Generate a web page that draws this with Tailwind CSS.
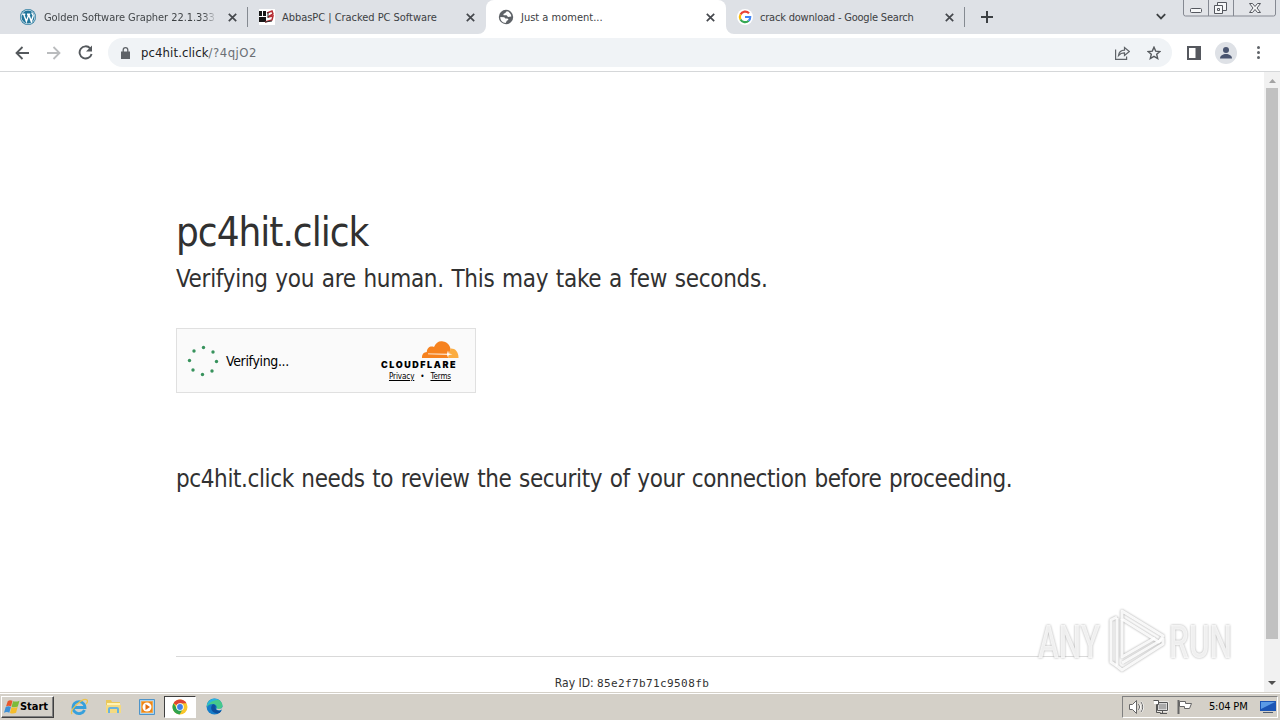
<!DOCTYPE html>
<html lang="en">
<head>
    <meta charset="UTF-8">
    <meta name="viewport" content="width=device-width, initial-scale=1.0">
    <script src="https://cdn.jsdelivr.net/npm/@tailwindcss/browser@4"></script>
    <title>Just a moment...</title>
</head>
<body class="w-[1280px] h-[720px] overflow-hidden flex flex-col bg-white font-['DejaVu_Sans_Condensed','DejaVu_Sans',sans-serif] text-[#313131]">
<!-- tab strip -->
<div class="relative flex h-[34px] shrink-0 bg-[#dee1e6] text-[11px] text-[#3c4043] leading-[34px] whitespace-nowrap">
    <div class="flex items-center w-[248px] pl-5 pr-[10px] shrink-0">
        <svg class="size-4 mr-2 shrink-0" viewBox="0 0 16 16"><circle cx="8" cy="8" r="8" fill="#21759b"/><circle cx="8" cy="8" r="6.9" fill="none" stroke="#fff" stroke-width=".7"/><path d="M2.3 5.3h3M7 5.3h3.2M3.7 5.3l2.7 7.2L8.3 7 7.8 5.3M8.7 5.3l2.6 7.2 1.9-5.7c.3-1.5-1.5-1.7-1.3-3.2" fill="none" stroke="#fff" stroke-width="1.4"/></svg>
        <div class="w-[173px] overflow-hidden pt-px tracking-[-0.06px] bg-linear-to-r from-[#3c4043] from-92% to-transparent bg-clip-text text-transparent">Golden Software Grapher 22.1.333 C</div>
        <svg class="size-[9px] ml-auto mr-[1px] shrink-0" viewBox="0 0 9 9"><path d="M.8.8l7.4 7.4M8.2.8L.8 8.2" stroke="#45484d" stroke-width="1.7"/></svg>
        <div class="w-px h-5 bg-[#858a91] ml-[9px] -mr-[10px]"></div>
    </div>
    <div class="flex items-center w-[238px] pl-[11px] pr-[11px] shrink-0">
        <svg class="size-4 mr-[7px] shrink-0" viewBox="0 0 16 16"><path fill="#fff" d="M0 0h16v16H0z"/><path fill="#171717" d="M0 2h7v11H0z"/><path fill="#fff" d="M3 2h1v5H3zM0 7h7v1H0z"/><path d="M8 4l5-2 1 3-5 3 5-1-1 4-7 2" fill="none" stroke="#b62e35" stroke-width="1.500"/><path d="M9 3v6M6 13l7-1" stroke="#333"/></svg>
        <span class="pt-px tracking-[-0.04px]">AbbasPC | Cracked PC Software</span>
        <svg class="size-[9px] ml-auto shrink-0" viewBox="0 0 9 9"><path d="M.8.8l7.4 7.4M8.2.8L.8 8.2" stroke="#45484d" stroke-width="1.7"/></svg>
    </div>
    <div class="relative flex items-center w-[240px] pl-3 pr-[11px] shrink-0 bg-white rounded-t-lg">
        <svg class="absolute -left-2 bottom-0 size-2" viewBox="0 0 8 8"><path d="M8 0v8H0a8 8 0 0 0 8-8z" fill="#fff"/></svg>
        <svg class="absolute -right-2 bottom-0 size-2" viewBox="0 0 8 8"><path d="M0 0v8h8a8 8 0 0 1-8-8z" fill="#fff"/></svg>
        <svg class="size-4 mr-[7px] shrink-0" viewBox="0 0 16 16"><circle cx="8" cy="8" r="7.2" fill="#5f6368"/><path d="M2.300 8l4 .2 1 1.300H9.500l1 1.200-1.700 1-1.100 2.200C4.500 13.700 2.200 11.500 2.300 8zM8.800 2.300L7.200 4l-1.800.9.200 1.400h3l1.400 1.600 3.300-.4C13.300 4.800 11.300 2.700 8.800 2.300z" fill="#fff"/></svg>
        <span class="pt-px">Just a moment...</span>
        <svg class="size-[9px] ml-auto shrink-0" viewBox="0 0 9 9"><path d="M.8.8l7.4 7.4M8.2.8L.8 8.2" stroke="#45484d" stroke-width="1.7"/></svg>
    </div>
    <div class="flex items-center w-[239px] pl-[11px] pr-[11px] shrink-0">
        <svg class="size-4 mr-[7px] shrink-0" viewBox="0 0 16 16"><circle cx="8" cy="8" r="8" fill="#fff"/><g fill="none" stroke-width="2.2"><path d="M12 4.200A5.200 5.200 0 0 0 3.500 5.500" stroke="#ea4335"/><path d="M3.500 5.500a5.200 5.200 0 0 0 0 5" stroke="#fbbc05"/><path d="M3.500 10.500a5.200 5.200 0 0 0 8.200 1.200" stroke="#34a853"/><path d="M8 8h5.200a5.200 5.200 0 0 1-1.600 3.800" stroke="#4285f4"/></g></svg>
        <span class="pt-px tracking-[-0.2px]">crack download - Google Search</span>
        <svg class="size-[9px] ml-auto shrink-0" viewBox="0 0 9 9"><path d="M.8.8l7.4 7.4M8.2.8L.8 8.2" stroke="#45484d" stroke-width="1.7"/></svg>
        <div class="w-px h-5 bg-[#858a91] ml-[10px] -mr-[11px]"></div>
    </div>
    <svg class="size-3 mt-[11px] ml-4" viewBox="0 0 12 12"><path d="M6 0v12M0 6h12" stroke="#3c4043" stroke-width="2"/></svg>
    <svg class="w-[10px] h-[7px] mt-[13px] ml-[163px]" viewBox="0 0 10 7"><path d="M.8 1.200L5 5.400l4.200-4.200" fill="none" stroke="#3c4043" stroke-width="1.800"/></svg>
    <!-- window buttons -->
    <svg class="w-[94px] h-[17px] ml-[17px]" viewBox="0 0 94 17"><path d="M.5 0v14q0 2 2 2h88q2 0 2-2V0M25.500 0v16M50.500 0v16" fill="#e2e4e8" stroke="#858992"/><g fill="#f6f7f8" stroke="#55585f"><rect x="7.500" y="8.500" width="11" height="4" rx="1"/><path d="M34.500 2.500h9v8h-9z"/><path d="M31.500 5.500h8v8h-8z"/><path d="M34.500 8.500h2v2h-2z"/><path d="M66.500 3.500h3l2.500 3 2.500-3h3l-3.500 4.500 3.500 4.500h-3L72 9.500l-2.500 3h-3l3.500-4.500z"/></g></svg>
</div>
<!-- toolbar -->
<div class="flex items-center h-[38px] shrink-0 bg-white border-b border-[#d5d7d9] pl-[15px] pr-5">
    <svg class="w-[14px] h-[14px] shrink-0" viewBox="0 0 14 14"><path d="M14 7H1.500M7.500 1L1.500 7l6 6" fill="none" stroke="#55595d" stroke-width="1.800"/></svg>
    <svg class="w-[14px] h-[14px] ml-[18px] shrink-0" viewBox="0 0 14 14"><path d="M0 7h12.500M6.500 1l6 6-6 6" fill="none" stroke="#babcbe" stroke-width="1.800"/></svg>
    <svg class="w-[15px] h-[15px] ml-[17px] shrink-0" viewBox="0 0 15 15"><path d="M12.200 3.300A6.100 6.100 0 1 0 13.600 9" fill="none" stroke="#55595d" stroke-width="1.900"/><path d="M14 .5v6H8z" fill="#55595d"/></svg>
    <div class="flex items-center w-[1064px] h-[29px] ml-[15px] rounded-full bg-[#f0f3f6] pl-[13px] pr-[11px] shrink-0">
        <svg class="w-[9px] h-3 mr-[11px]" viewBox="0 0 9 12"><path d="M0 4.500h9V12H0z" fill="#5f6368"/><path d="M2.200 5V3a2.300 2.300 0 0 1 4.600 0v2" fill="none" stroke="#5f6368" stroke-width="1.300"/></svg>
        <span class="text-[13px] text-[#202124] tracking-[0.100px]">pc4hit.click<span class="text-[#6b6f74] tracking-[0.500px]">/?4qjO2</span></span>
        <svg class="w-[15px] h-[14px] ml-auto" viewBox="0 0 15 14"><path d="M.6 3.500v9.900h11V10.500M3.500 9.500C4 6.200 6 4.300 9.500 4.200V1.500l4.800 4-4.800 4V6.900C7 6.800 5.200 7.600 3.500 9.500z" fill="none" stroke="#5f6368" stroke-width="1.200"/></svg>
        <svg class="size-[14px] ml-[17px]" viewBox="0 0 14 14"><path d="M7 1.200l1.700 3.900 4.200.4-3.200 2.800 1 4.200L7 10.300l-3.700 2.200 1-4.200L1.100 5.500l4.200-.4z" fill="none" stroke="#55595d" stroke-width="1.400"/></svg>
    </div>
    <svg class="size-[14px] ml-[15px]" viewBox="0 0 14 14"><path d="M0 0h14v14H0zM2 2v10h6.500V2z" fill="#55585e" fill-rule="evenodd"/></svg>
    <svg class="size-[22px] ml-[14px]" viewBox="0 0 22 22"><circle cx="11" cy="11" r="11" fill="#dee1e6"/><circle cx="11" cy="8" r="3" fill="#4a5570"/><path d="M5 16.500c0-3 3-4.500 6-4.500s6 1.500 6 4.500z" fill="#4a5570"/></svg>
    <svg class="w-[3px] h-[13px] ml-auto" viewBox="0 0 3 13"><g fill="#5f6368"><circle cx="1.500" cy="1.500" r="1.500"/><circle cx="1.500" cy="6.500" r="1.500"/><circle cx="1.500" cy="11.500" r="1.500"/></g></svg>
</div>
<!-- page -->
<div class="flex h-[620px] shrink-0 overflow-hidden">
    <div class="w-[1264px] px-[176px] pt-[130px] whitespace-nowrap">
        <h1 class="text-[40px] leading-[60px] tracking-[-1px]">pc4hit.click</h1>
        <h2 class="text-[24px] leading-[34px] tracking-[-0.300px] [word-spacing:1.100px]">Verifying you are human. This may take a few seconds.</h2>
        <div class="flex items-center w-[300px] h-[65px] mt-8 bg-[#fafafa] border border-[#e0e0e0] pl-[10px] pr-4 text-black">
            <svg class="size-8 mr-[7px]" viewBox="0 0 32 32"><g fill="#37925c"><circle cx="16.500" cy="2.500" r="1.700"/><circle cx="26" cy="7" r="1.700"/><circle cx="29.500" cy="16.500" r="1.700"/><circle cx="25" cy="26" r="1.700"/><circle cx="15.500" cy="29.500" r="1.700"/><circle cx="6" cy="25" r="1.700"/><circle cx="2.500" cy="15.500" r="1.700"/><circle cx="7" cy="6" r="1.700"/></g></svg>
            <span class="pt-[2px] text-[14px] tracking-[-0.350px]">Verifying...</span>
            <div class="ml-auto w-[78px] flex flex-col items-center pt-[2px]">
                <svg class="w-[38px] h-[18px] ml-auto" viewBox="0 0 38 18"><path d="M1 17c-.3-3.500 1.500-5.800 4.800-6C6 6.500 9.500 4.500 13 6 15 1.500 18-.2 22 .5c4 .6 7 3.500 7.500 7.500L27 17z" fill="#f6821f"/><path d="M27 17l2.500-9.500c4.500-.3 8 3 8 9.500z" fill="#fbad41"/><path d="M7 12.600l19 .2 1-3.300.8 3 3.700.8-3.700.7-1 2-.8-2.200-19-.6z" fill="#fff"/></svg>
                <div class="w-[78px] mt-[1px] text-[9px] leading-[9px] font-black font-['Inter','DejaVu_Sans',sans-serif] tracking-[1.550px]">CLOUDFLARE</div>
                <div class="flex items-center gap-[6px] mt-[2px] text-[8px] leading-[12px] tracking-[-0.1px]"><u>Privacy</u><span>•</span><u>Terms</u></div>
            </div>
        </div>
        <div class="mt-[68px] text-[24px] leading-9 tracking-[-0.400px] [word-spacing:1.150px]">pc4hit.click needs to review the security of your connection before proceeding.</div>
        <div class="w-[912px] mt-[159px] border-t border-[#d9d9d9] pt-4 text-center text-[12px] leading-[21px]">Ray ID: <code class="font-['DejaVu_Sans_Mono',monospace] text-[11px] tracking-[0.380px]">85e2f7b71c9508fb</code></div>
    </div>
    <div class="flex flex-col items-center w-4 bg-[#f1f1f1]">
        <svg class="w-[7px] h-4" viewBox="0 0 7 16"><path d="M0 11l3.500-4L7 11z" fill="#a3a3a3"/></svg>
        <div class="w-3 h-[551px] bg-[#c1c1c1]"></div>
        <svg class="w-2 h-4 mt-auto" viewBox="0 0 8 16"><path d="M0 5l4 4 4-4z" fill="#505050"/></svg>
    </div>
</div>
<!-- watermark -->
<div class="absolute left-[1038px] top-[608px] w-[210px] h-[66px] font-['Roboto',sans-serif] font-medium text-[46px] leading-none">
    <svg class="w-[210px] h-[66px] overflow-visible drop-shadow-[0_0_1px_#999]" viewBox="0 0 210 66"><g fill="#fff" fill-opacity=".8"><text x="0" y="50" textLength="62" lengthAdjust="spacingAndGlyphs">ANY</text><text x="131" y="50" textLength="63" lengthAdjust="spacingAndGlyphs">RUN</text></g><g fill="none" stroke="#fff" stroke-opacity=".9" stroke-width="3" stroke-linejoin="round"><path d="M79 9l-6 3v42l6 4"/><path d="M84 3l41 25-4 6-37-23z"/><path d="M84 11v38l33-19"/><path d="M84 55l41-24v5L84 62l-5-4V10"/></g></svg>
</div>
<!-- taskbar -->
<div class="relative flex items-center h-7 shrink-0 bg-[#d4d0c8] border-t border-[#d4d0c8] shadow-[inset_0_1px_0_#fff] text-black">
    <div class="flex items-center w-[53px] h-[22px] ml-[1px] mt-[1px] pl-[2px] border border-t-white border-l-white border-r-[#404040] border-b-[#404040] shadow-[inset_-1px_-1px_0_#808080] text-[11px] font-bold">
        <svg class="w-4 h-4 shrink-0" viewBox="0 0 15 15"><path d="M3.500 2q2-1.500 4.500-.3L6.600 7Q4.200 5.700 1.900 7z" fill="#e7572c"/><path d="M8.500 2q2.700 1 6-.4L13 7q-3 1.300-5.900.2z" fill="#7dbb39"/><path d="M1.600 7.500q2.500-1.300 4.900-.1L5 12.800Q2.500 11.600 0 13z" fill="#3c90d7"/><path d="M7 7.700q3 1 5.800-.2L11.300 13q-3 1.200-5.700.1z" fill="#f5bd2b"/></svg>
        <span class="-tracking-[0.050px] pt-px">Start</span>
    </div>
    <svg class="size-[18px] ml-4" viewBox="0 0 18 18"><path d="M14.500 12A6 6 0 1 1 15 9.500H4.500" fill="none" stroke="#36a0dc" stroke-width="2.800"/><path d="M2 16C-1 12 13-1 17 2c1 1 0 3-1 4" fill="none" stroke="#ecc34b" stroke-width="1.300"/></svg>
    <svg class="size-[17px] ml-[17px]" viewBox="0 0 17 17"><path d="M1 2h5l1 2h8v11H1z" fill="#eac85b"/><path d="M2 5h13v4H2z" fill="#fff3b2"/><path d="M1 7h15v8H1z" fill="#f4da81"/><path d="M4 15v-4q0-1 1-1h7q1 0 1 1v4" fill="none" stroke="#68b3de" stroke-width="2"/></svg>
    <svg class="size-4 ml-[17px]" viewBox="0 0 16 16"><path d="M.5.5h15v15H.5z" fill="#a9d3ef" stroke="#4e94c9"/><path d="M2.500 2.500h11v11h-11z" fill="#ed8618" stroke="#f3a84c"/><circle cx="8" cy="8" r="4.500" fill="#fff"/><path d="M6.500 5l4.500 3-4.500 3z" fill="#e06c10"/></svg>
    <div class="flex items-center justify-center w-[32px] h-[22px] ml-[9px] mt-[1px] bg-white border border-t-[#404040] border-l-[#404040] border-r-white border-b-white">
        <svg class="size-4" viewBox="0 0 16 16"><circle cx="8" cy="8" r="7.500" fill="#f9c62b"/><path d="M8 8L1.500 4.200A7.500 7.500 0 0 1 14.500 4.200L8 4.500z" fill="#df4534"/><path d="M1.500 4.200A7.500 7.500 0 0 0 7.600 15.500L11 9.800 8 8 5 9.700z" fill="#2fa34e"/><circle cx="8" cy="8" r="3.800" fill="#fff"/><circle cx="8" cy="8" r="2.900" fill="#3f7fe8"/></svg>
    </div>
    <svg class="size-[17px] ml-[10px]" viewBox="0 0 17 17"><circle cx="8.500" cy="8.500" r="8" fill="#167dc9"/><path d="M1 7C2-1 15-1 16.500 7c.3 4-4 5-6 3.500 1-2-.5-4.500-3.500-4.500-3 0-5 1-6 3z" fill="#45c98c"/><path d="M1 7C3 .5 9-.5 13 2 8 2 4 3.500 1 8z" fill="#28b3e3"/><path d="M7 6c-4 4-1 9 4 9.500 2-.2 3.500-1 4.500-3-3 1-6 0-6-3 1-1 0-2.500-2.500-3.500z" fill="#0e4f9c"/><path d="M10.500 10.500c-1 1.500 3 2.500 5.500 1l1-1V9c-1.500 2-4 2.500-6.500 1.500z" fill="#d4d0c8"/></svg>
    <!-- tray -->
    <div class="flex items-center w-[156px] h-[22px] ml-auto mr-[2px] mt-[1px] pl-[6px] border border-t-[#808080] border-l-[#808080] border-r-white border-b-white text-[11px]">
        <svg class="w-4 h-4 shrink-0" viewBox="0 0 16 16"><path d="M.5 5.500h3l4-4v13l-4-4h-3z" fill="#fff" stroke="#666"/><path d="M10 5q2 3 0 6M12 3q4 5 0 10" fill="none" stroke="#fff" stroke-width="2"/><path d="M9.500 5q2.500 3 0 6M12 3q3.500 5 0 10" fill="none" stroke="#666"/></svg>
        <svg class="w-4 h-4 ml-2 shrink-0" viewBox="0 0 16 16"><path d="M4.500 3.500h10v8h-10z" fill="#aaa" stroke="#fff" stroke-width="2"/><path d="M4.500 3.500h10v8h-10zM7 14.500h7M9.500 12v2M.5 1.500h5v4h-2v8h4" fill="none" stroke="#555"/><path d="M1 2h4v3H1z" fill="#fff"/></svg>
        <svg class="w-4 h-4 ml-2 shrink-0" viewBox="0 0 16 16"><path d="M1.500 1v14" stroke="#666" stroke-width="2"/><path d="M2.500 2.500h6v2h6l-2 5h-5v-2h-5z" fill="#fff" stroke="#666"/></svg>
        <span class="ml-4 pt-px tracking-[-0.2px] whitespace-nowrap">5:04 PM</span>
        <svg class="w-4 h-[14px] ml-auto mr-[1px] shrink-0" viewBox="0 0 16 14"><path d="M0 1h16v10H0z" fill="#1b55b5"/><path d="M1 2h14L1 9z" fill="#5b9be6"/><path d="M3 12h10v1H3z" fill="#4d5b70"/></svg>
    </div>
</div>
</body>
</html>
